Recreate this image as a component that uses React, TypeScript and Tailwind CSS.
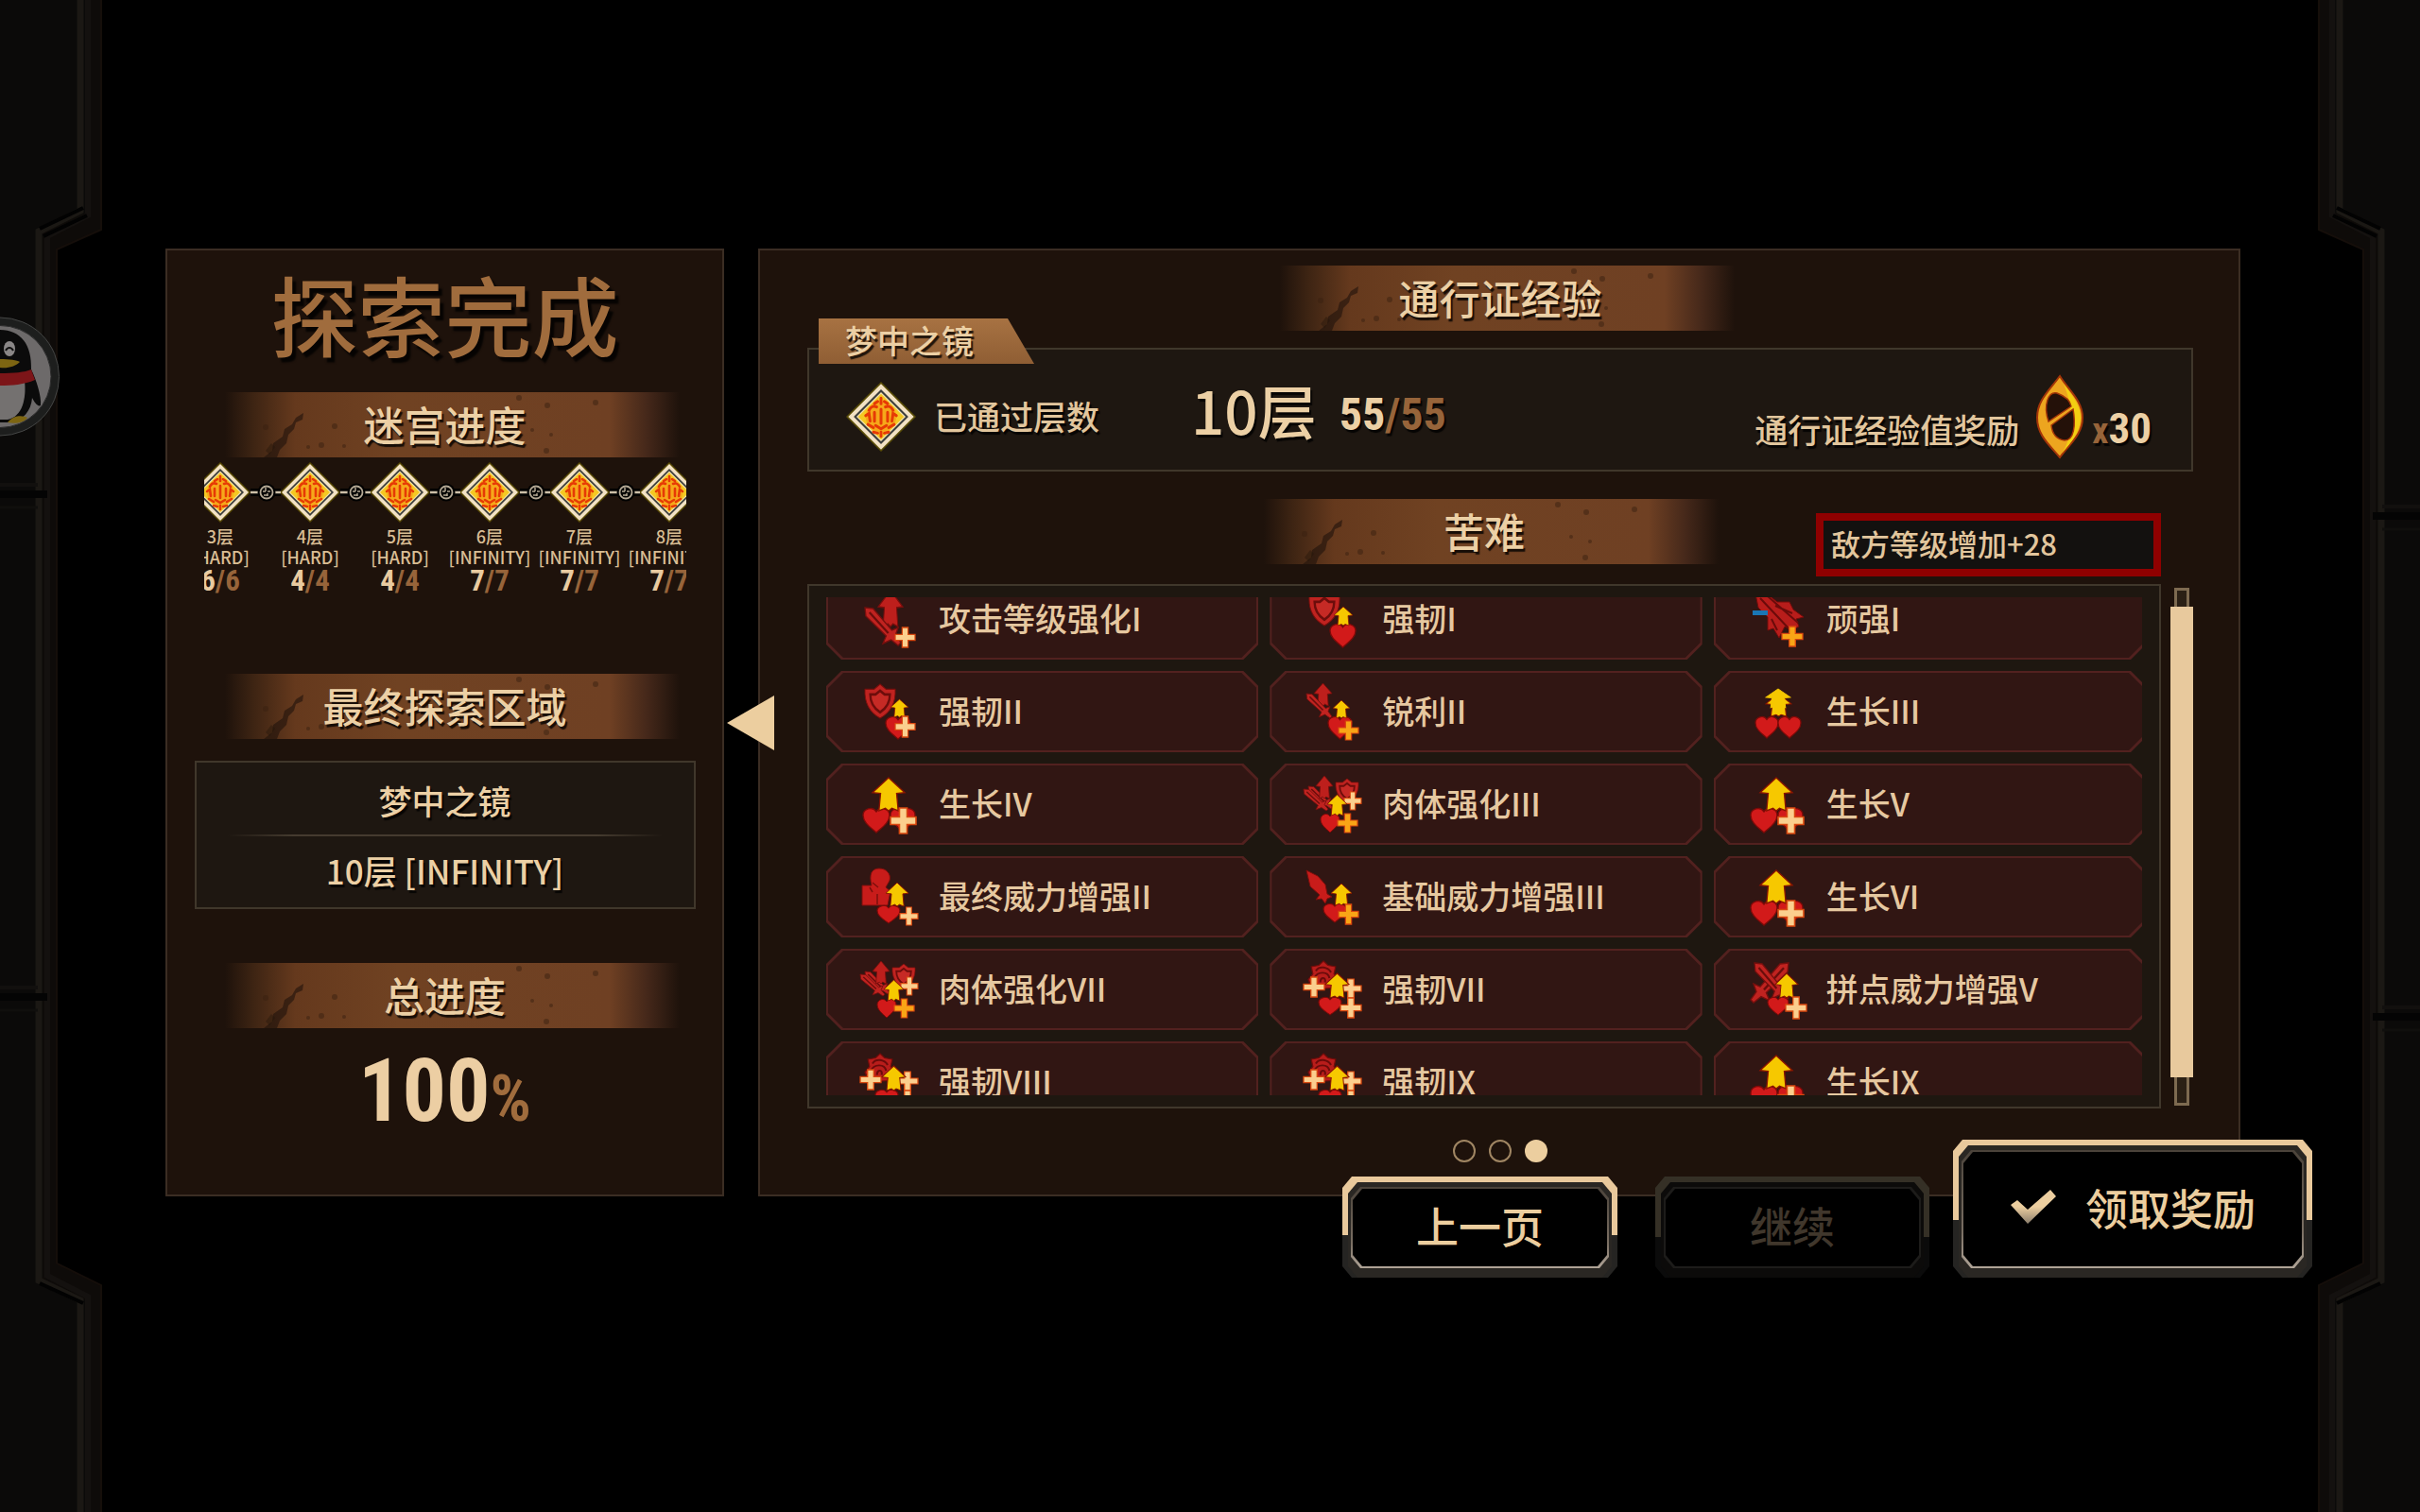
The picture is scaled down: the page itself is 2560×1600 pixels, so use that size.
import type { ReactNode } from 'react'

type Box = { x: number; y: number; w: number; h: number }
type Stage = { floor: string; mode: string; done: number; total: number }

const stages: Stage[] = [
  { floor: '3层', mode: '[HARD]', done: 6, total: 6 },
  { floor: '4层', mode: '[HARD]', done: 4, total: 4 },
  { floor: '5层', mode: '[HARD]', done: 4, total: 4 },
  { floor: '6层', mode: '[INFINITY]', done: 7, total: 7 },
  { floor: '7层', mode: '[INFINITY]', done: 7, total: 7 },
  { floor: '8层', mode: '[INFINITY]', done: 7, total: 7 },
]

const PALE = '#fbcf8e'
const ORANGE = '#f9a516'

const NUM = "font-['Roboto_Condensed','Open_Sans_Condensed','Noto_Sans_Condensed','Roboto',sans-serif] font-bold"
const SHADOW = '[text-shadow:2px_3px_1px_#000000cc]'

/* ── Icon parts, each drawn in a stretched 20x20 box ── */
function Part({ x, y, w, h, children }: Box & { children: ReactNode }) {
  return (
    <svg x={x} y={y} width={w} height={h} viewBox="0 0 20 20" preserveAspectRatio="none" overflow="visible">
      {children}
    </svg>
  )
}

function Heart(p: Box) {
  return (
    <Part {...p}>
      <path d="M10 20 C6 16 0 12 0 6 C0 1 7 -2 10 3 C13 -2 20 1 20 6 C20 12 14 16 10 20Z" fill="#d21a1a" stroke="#7d0a08" strokeWidth="1" />
    </Part>
  )
}

function UpArrow({ color = '#f6c800', edge = '#8a1500', ...p }: Box & { color?: string; edge?: string }) {
  return (
    <Part {...p}>
      <path d="M10 0 L20 9 L15 9.500 L16 20 L12 18.500 L10 20 L8 18.500 L4 20 L5 9.500 L0 9Z" fill={color} stroke={edge} strokeWidth="0.800" />
    </Part>
  )
}

function Plus({ color = PALE, ...p }: Box & { color?: string }) {
  return (
    <Part {...p}>
      <path d="M7 0 H13 V7 H20 V13 H13 V20 H7 V13 H0 V7 H7Z" fill={color} stroke="#d9480f" strokeWidth="1.200" />
    </Part>
  )
}

function Shield(p: Box) {
  return (
    <Part {...p}>
      <path d="M0 3 L6 3 L10 0 L14 3 L20 3 C20.500 11 17 16.500 10 20 C3 16.500 -0.500 11 0 3Z" fill="#bf2320" stroke="#7d0f0c" strokeWidth="0.600" />
      <path d="M3.500 6 L7 6 L10 3.800 L13 6 L16.500 6 C16.500 11 14.500 14 10 16.500 C5.500 14 3.500 11 3.500 6Z" fill="#c62a25" stroke="#6d0d0b" strokeWidth="1.500" />
    </Part>
  )
}

function Sword({ flip, ...p }: Box & { flip?: boolean }) {
  return (
    <Part {...p}>
      <g transform={flip ? 'translate(20 0) scale(-1 1)' : undefined}>
        <path d="M0 0 L4.500 0.500 L15 12 L18.500 10.500 L17 14.500 L20 18.500 L18.500 20 L14.500 17 L10 19 L11.800 15 L0.500 4.500Z" fill="#c02320" stroke="#760f0d" strokeWidth="0.700" />
        <path d="M2.500 2.500 L13 13.500" stroke="#6b0d0b" strokeWidth="1.200" />
      </g>
    </Part>
  )
}

function Rose(p: Box) {
  return (
    <Part {...p}>
      <path d="M10 0 L13 3 L18 4 L17 9 L20 13 L15 19 L3 20 L0 13 L3 9 L2 4 L7 3Z" fill="#b81d1b" stroke="#740c0a" strokeWidth="0.800" />
      <path d="M5 7 C7 3 13 4 15 8 M4 12 C6 7 13 7 14 12 M8 15 C8 11 12 11 11 15" fill="none" stroke="#6b0b0a" strokeWidth="1.300" />
    </Part>
  )
}

const ARROW_RED = { color: '#bd1f1c', edge: '#7a0e0c' }

const growth = (
  <>
    <Heart x={31} y={34} w={26} h={25} />
    <Heart x={2} y={34} w={28} h={26} />
    <UpArrow x={12} y={2} w={34} h={35} />
    <Plus x={31} y={34} w={27} h={27} />
  </>
)

const body = (
  <>
    <Sword x={4} y={11} w={26} h={24} />
    <Sword x={-1} y={14} w={26} h={23} />
    <UpArrow x={12} y={0} w={18} h={24} {...ARROW_RED} />
    <Shield x={33} y={3} w={24} h={26} />
    <Plus x={42} y={17} w={18} h={19} />
    <Heart x={17} y={40} w={20} h={20} />
    <UpArrow x={24} y={20} w={21} h={22} />
    <Plus x={35} y={40} w={21} h={20} color={ORANGE} />
  </>
)

const toughRose = (
  <>
    <Rose x={4} y={0} w={32} h={30} />
    <Plus x={-1} y={17} w={22} h={21} />
    <Plus x={38} y={19} w={22} h={20} />
    <Heart x={15} y={38} w={24} h={19} />
    <UpArrow x={22} y={13} w={25} h={26} />
    <Plus x={38} y={39} w={22} h={21} />
  </>
)

const hardships: { name: string; icon: ReactNode }[] = [
  {
    name: '攻击等级强化I',
    icon: (
      <>
        <UpArrow x={18} y={0} w={26} h={38} {...ARROW_RED} />
        <Sword x={4} y={18} w={38} h={40} />
        <Plus x={36} y={39} w={21} h={21} />
      </>
    ),
  },
  {
    name: '强韧I',
    icon: (
      <>
        <Shield x={5} y={1} w={32} h={36} />
        <Heart x={27} y={35} w={27} h={25} />
        <UpArrow x={31} y={17} w={20} h={20} />
      </>
    ),
  },
  {
    name: '顽强I',
    icon: (
      <>
        <path d="M7 3 L20 4 L30 12 L43 12 L47 20 L58 28 L50 30 L53 38 L46 42 L38 38 L32 50 L26 40 L20 42 L20 28 L10 18Z" fill="#b81d1b" stroke="#740c0a" strokeWidth="1" />
        <path d="M12 8 L44 42 M20 6 L52 34 M28 16 L46 24 M24 30 L30 42" stroke="#6b0b0a" strokeWidth="2" />
        <path d="M4 21 H20 V26 H4Z" fill="#1a76b5" />
        <Plus x={35} y={38} w={22} h={21} color={ORANGE} />
      </>
    ),
  },
  {
    name: '强韧II',
    icon: (
      <>
        <Shield x={4} y={1} w={32} h={36} />
        <Heart x={26} y={35} w={26} h={24} />
        <UpArrow x={31} y={17} w={19} h={19} />
        <Plus x={36} y={35} w={21} h={22} />
      </>
    ),
  },
  {
    name: '锐利II',
    icon: (
      <>
        <UpArrow x={10} y={0} w={19} h={24} {...ARROW_RED} />
        <Sword x={2} y={11} w={27} h={26} />
        <Heart x={25} y={35} w={25} h={24} />
        <UpArrow x={30} y={18} w={18} h={19} />
        <Plus x={36} y={40} w={21} h={20} color={ORANGE} />
      </>
    ),
  },
  {
    name: '生长III',
    icon: (
      <>
        <Heart x={7} y={35} w={24} h={23} />
        <Heart x={31} y={35} w={24} h={23} />
        <UpArrow x={18} y={11} w={27} h={24} />
        <UpArrow x={18} y={6} w={26} h={20} edge="#f6c800" />
      </>
    ),
  },
  { name: '生长IV', icon: growth },
  { name: '肉体强化III', icon: body },
  { name: '生长V', icon: growth },
  {
    name: '最终威力增强II',
    icon: (
      <>
        <path d="M11 18 C8 6 11 0 19 0 C27 0 32 6 30 13 L26 20 L31 24 L28 39 L1 39 L1 18Z" fill="#c81c1a" stroke="#7d0f0c" strokeWidth="1" />
        <path d="M12 15 L18 20 M9 20 L12 25 M17 27 V38" stroke="#7d0f0c" strokeWidth="1.500" />
        <Heart x={17} y={39} w={24} h={19} />
        <UpArrow x={26} y={15} w={24} h={25} />
        <Plus x={41} y={41} w={19} h={19} />
      </>
    ),
  },
  {
    name: '基础威力增强III',
    icon: (
      <>
        <path d="M2 2 L14 8 L22 17 L24 27 L29 30 L24 32 L22 37 L18 32 L12 33 L16 28 L6 19Z" fill="#c81c1a" stroke="#7d0f0c" strokeWidth="1" />
        <Heart x={20} y={37} w={24} h={20} />
        <UpArrow x={28} y={16} w={22} h={23} />
        <Plus x={36} y={38} w={21} h={21} color={ORANGE} />
      </>
    ),
  },
  { name: '生长VI', icon: growth },
  { name: '肉体强化VII', icon: body },
  { name: '强韧VII', icon: toughRose },
  {
    name: '拼点威力增强V',
    icon: (
      <>
        <Sword x={2} y={2} w={40} h={42} flip />
        <Sword x={6} y={2} w={36} h={40} />
        <Heart x={20} y={38} w={22} h={19} />
        <UpArrow x={28} y={13} w={24} h={26} />
        <Plus x={39} y={38} w={22} h={23} />
      </>
    ),
  },
  { name: '强韧VIII', icon: toughRose },
  { name: '强韧IX', icon: toughRose },
  { name: '生长IX', icon: growth },
]

function Emblem({ className }: { className: string }) {
  return (
    <svg viewBox="0 0 64 64" className={className} aria-hidden="true">
      <path d="M32 0 L64 32 L32 64 L0 32Z" fill="#8a7a00" opacity="0.550" />
      <path d="M32 2 L62 32 L32 62 L2 32Z" fill="#f3e2c4" />
      <path d="M32 7 L57 32 L32 57 L7 32Z" fill="#3d3f3d" />
      <path d="M32 9.500 L54.500 32 L32 54.500 L9.500 32Z" fill="#f6e3b0" />
      <path d="M32 11 L53 32 L32 53 L11 32Z" fill="#f5c822" />
      <circle cx="32" cy="32" r="14" fill="#f6a81a" />
      <g fill="none" stroke="#e63a05" strokeWidth="2.600" strokeLinecap="round">
        <path d="M32 15 V20 M26 20 L29 18 M38 20 L35 18 M21 26 C23 22 26 22 28 23 M43 26 C41 22 38 22 36 23" />
        <path d="M18 31 L21 29 L22 36 M46 31 L43 29 L42 36 M26 28 V36 M32 25 V38 M38 28 V36" />
        <path d="M20 39 L25 42 M44 39 L39 42 M27 40 L32 43 L37 40 M25 46 L29 47 M39 46 L35 47 M32 46 V50" />
      </g>
    </svg>
  )
}

function Link() {
  return (
    <svg viewBox="0 0 36 20" className="absolute top-[22px] left-[77px] z-10 h-5 w-9" aria-hidden="true">
      <path d="M2 10 H34" stroke="#000" strokeWidth="8" />
      <path d="M2 10 H10 M26 10 H34" stroke="#cdbfa8" strokeWidth="2.500" />
      <circle cx="19" cy="10" r="9.500" fill="#000" />
      <circle cx="19" cy="10" r="6.500" fill="none" stroke="#b3a793" strokeWidth="1.800" />
      <path d="M15 9 H18 M20 9 H23 M18 5 V9 M20 11 V14 M16 13 H20" stroke="#b3a793" strokeWidth="1.500" />
    </svg>
  )
}

function Banner({ children }: { children: ReactNode }) {
  return (
    <div className="relative h-[69px] w-[496px] bg-[linear-gradient(to_right,transparent_3%,#3d2413_9%,#65391d_18%,#704222_40%,#6f4023_85%,#45281a_93%,transparent_100%)]">
      <svg viewBox="0 0 496 69" className="absolute inset-0 h-full w-full" aria-hidden="true">
        <path d="M98 22 L90 27 L86 34 L78 39 L76 47 L66 54 L65 62 L56 69 H70 L73 61 L80 54 L82 45 L88 39 L90 32 L97 29Z" fill="#20130b" opacity="0.600" />
        <path d="M58 62 L64 54 L68 58 L62 66Z" fill="#20130b" opacity="0.400" />
        <g fill="#3a2111" opacity="0.500">
          <circle cx="58" cy="37" r="3" />
          <circle cx="131" cy="36" r="3" />
          <circle cx="117" cy="56" r="3" />
          <circle cx="141" cy="57" r="2" />
          <circle cx="103" cy="58" r="2" />
          <circle cx="326" cy="6" r="3" />
          <circle cx="356" cy="14" r="3" />
          <circle cx="407" cy="11" r="3" />
          <circle cx="355" cy="62" r="3" />
          <circle cx="340" cy="40" r="2" />
          <circle cx="360" cy="45" r="2" />
        </g>
      </svg>
      <h2 className={`relative text-center text-[43px] leading-[66px] font-medium text-[#ecd0a5] ${SHADOW}`}>{children}</h2>
    </div>
  )
}

function FrameButton({ children, size, disabled }: { children: ReactNode; size: string; disabled?: boolean }) {
  const cut = '[clip-path:polygon(10px_0,calc(100%_-_10px)_0,100%_12px,100%_calc(100%_-_12px),calc(100%_-_10px)_100%,10px_100%,0_calc(100%_-_12px),0_12px)]'
  const rim = disabled
    ? 'bg-[linear-gradient(to_bottom,#353026_60%,#0b0b0b_60%)]'
    : 'bg-[linear-gradient(to_bottom,#e9c99c_58%,#252422_58%)]'
  return (
    <button disabled={disabled} className={`flex px-[6px] pt-[6px] ${size} ${cut} ${rim}`}>
      <span className={`flex h-full w-full px-[3px] pt-[5px] pb-[10px] ${cut} ${disabled ? 'bg-[#0c0b0a]' : 'bg-[#2a2723]'}`}>
        <span className={`flex h-full w-full p-[2px] ${cut} ${disabled ? 'bg-[#1d1c1a]' : 'bg-[linear-gradient(to_bottom,#4b433a,#7b7064_70%,#b0a497)]'}`}>
          <span className={`flex h-full w-full items-center justify-center bg-black pb-[5px] text-[45px] leading-none ${cut} ${disabled ? 'text-[#40372c]' : 'text-[#ecce9f]'}`}>
            {children}
          </span>
        </span>
      </span>
    </button>
  )
}

function Pillar({ className, seams }: { className: string; seams: number[] }) {
  return (
    <svg viewBox="0 0 110 1600" preserveAspectRatio="none" className={`pointer-events-none absolute inset-y-0 h-full w-[110px] ${className}`} aria-hidden="true">
      <path d="M0 0 H108 V243 L60 264 V1337 L108 1360 V1600 H0Z" fill="#0e0b09" />
      <path d="M0 0 H90 V225 L45 246 V1355 L90 1376 V1600 H0Z" fill="#0b0a09" />
      <path d="M85 0 V223 L41 245 V1355 L85 1376 V1600" fill="none" stroke="#1b1814" strokeWidth="7" />
      <path d="M93 0 V228 L50 250 V1350 L93 1372 V1600" fill="none" stroke="#14110f" strokeWidth="6" />
      <path d="M107 0 V243 L60 264 V1337 L107 1360 V1600" fill="none" stroke="#150e0a" strokeWidth="2" />
      <path d="M42 242 L88 220 M46 250 L92 228 M42 1358 L88 1379" stroke="#020202" strokeWidth="4" />
      {seams.map(y => (
        <g key={y}>
          <path d={`M0 ${y - 10} H40`} stroke="#12100e" strokeWidth="4" />
          <path d={`M0 ${y} H50`} stroke="#040404" strokeWidth="8" />
          <path d={`M0 ${y + 14} H40`} stroke="#100f0d" strokeWidth="3" />
        </g>
      ))}
    </svg>
  )
}

function FloatingPenguin() {
  return (
    <button aria-label="QQ" className="absolute top-[335px] left-0 h-[127px] w-[66px]">
      <svg viewBox="0 0 66 127" className="h-full w-full" aria-hidden="true">
        <circle cx="0" cy="63.500" r="62.500" fill="#1d1e1d" stroke="#454645" strokeWidth="1" />
        <circle cx="0" cy="63.500" r="54" fill="#6d6a6a" stroke="#2b2b2b" strokeWidth="1" />
        <path d="M0 14 C22 14 34 30 33 56 C38 66 44 84 43 94 C40 96 36 90 34 86 C33 100 24 110 12 112 H0Z" fill="#0b0b0b" />
        <path d="M0 68 H26 C28 86 24 106 8 109 H0Z" fill="#747170" />
        <ellipse cx="10" cy="34" rx="6" ry="8" fill="#8a8787" />
        <path d="M6 36 C8 32 12 32 14 36" fill="none" stroke="#111" strokeWidth="2" />
        <path d="M0 45 C10 45 18 46 21 48 C16 53 8 55 0 54Z" fill="#7d6512" />
        <path d="M0 60 C14 60 26 59 33 56 L37 67 C26 72 12 73 0 73Z" fill="#7c1518" />
        <path d="M8 112 C14 104 24 104 29 107 C26 112 16 114 8 112Z" fill="#7d6512" />
      </svg>
    </button>
  )
}

function LabyrinthPanel() {
  return (
    <section className="flex w-[591px] shrink-0 flex-col items-center border-2 border-[#3b2d23] bg-[#1e120b] pt-[18px] pb-[59px]">
      <h1 className="text-[92px] leading-[96px] font-medium text-[#a06c3d] [text-shadow:4px_5px_2px_#000000cc]">探索完成</h1>

      <div className="mt-9">
        <Banner>迷宫进度</Banner>
      </div>
      <ol className="mt-[5px] flex w-[510px] justify-center overflow-hidden">
        {stages.map((s, i) => (
          <li key={s.floor} className="relative flex w-[95px] shrink-0 flex-col items-center text-[18px] leading-[22px] whitespace-nowrap text-[#d9bd94]">
            <Emblem className="mb-[3px] h-16 w-16" />
            {i < stages.length - 1 && <Link />}
            <span>{s.floor}</span>
            <span>{s.mode}</span>
            <span className={`text-[31px] leading-[30px] text-[#e9cba0] ${NUM}`}>
              {s.done}
              <span className="text-[#97643a]">/{s.total}</span>
            </span>
          </li>
        ))}
      </ol>

      <div className="mt-[83px]">
        <Banner>最终探索区域</Banner>
      </div>
      <div className={`mt-[23px] flex h-[157px] w-[530px] flex-col items-center justify-center border-2 border-[#40372b] bg-[#1e1711] text-[35px] text-[#ecd0a5] ${SHADOW}`}>
        <p className="leading-[72px]">梦中之镜</p>
        <div className="h-[2px] w-[460px] bg-[linear-gradient(to_right,transparent,#453b2f_15%,#453b2f_85%,transparent)]" />
        <p className="leading-[72px]">10层 [INFINITY]</p>
      </div>

      <div className="mt-[57px]">
        <Banner>总进度</Banner>
      </div>
      <p className={`mt-[17px] h-[100px] text-[92px] leading-[100px] text-[#ecceA3] ${NUM}`}>
        100<span className="text-[68px] text-[#a06c3d]">%</span>
      </p>
    </section>
  )
}

function HardshipCard({ name, icon }: { name: string; icon: ReactNode }) {
  const cut = '[clip-path:polygon(16px_0,calc(100%_-_16px)_0,100%_16px,100%_calc(100%_-_16px),calc(100%_-_16px)_100%,16px_100%,0_calc(100%_-_16px),0_16px)]'
  return (
    <li className={`h-[86px] bg-[#52211f] p-[2px] ${cut}`}>
      <div className={`flex h-full items-center gap-[22px] bg-[#311613] pl-[35px] ${cut}`}>
        <svg viewBox="0 0 60 60" className="h-[60px] w-[60px] shrink-0 overflow-visible" aria-hidden="true">
          {icon}
        </svg>
        <span className="pb-[2px] text-[34px] leading-10 whitespace-nowrap text-[#e6c8a0]">{name}</span>
      </div>
    </li>
  )
}

function RewardPanel() {
  return (
    <section className="relative flex min-w-0 flex-1 flex-col border-2 border-[#3b2d23] bg-[#1e120b] pt-4 pr-12 pl-[50px]">
      <button aria-label="收起" className="absolute top-1/2 -left-[36px] h-[60px] w-[52px] -translate-y-1/2">
        <svg viewBox="0 0 52 60" className="h-full w-full" aria-hidden="true">
          <path d="M51 1 V59 L1 30Z" fill="#ecce9f" />
        </svg>
      </button>

      <div className="flex justify-center">
        <Banner>通行证经验</Banner>
      </div>

      <div className={`relative mt-[18px] flex h-[131px] items-center border-2 border-[#40372b] bg-[#1e1711] pt-[14px] pr-[42px] pl-[39px] text-[35px] text-[#e2c69d] ${SHADOW}`}>
        <div className="absolute -top-[33px] left-[10px] h-[48px] w-[228px] bg-[linear-gradient(to_bottom,#a77242,#8f5e34)] pl-[28px] text-[34px] leading-[46px] text-[#ecd0a5] [clip-path:polygon(0_0,200px_0,100%_100%,0_100%)]">
          梦中之镜
        </div>
        <Emblem className="h-[74px] w-[74px]" />
        <span className="ml-[19px]">已通过层数</span>
        <span className="-mt-4 ml-[97px] text-[62px] leading-[70px] text-[#ecd0a5]">10层</span>
        <span className={`-mt-1 ml-6 text-[48px] leading-[60px] text-[#ecd0a5] ${NUM}`}>
          55<span className="text-[#97643a]">/55</span>
        </span>
        <div className="ml-auto flex items-end">
          <span className="mb-[10px] leading-[44px]">通行证经验值奖励</span>
          <svg viewBox="0 0 52 90" className="ml-[17px] h-[90px] w-[52px]" aria-hidden="true">
            <path d="M26 2 C36 18 50 28 50 46 C50 64 36 74 26 88 C14 74 2 64 2 46 C2 28 14 18 26 2Z" fill="#eda51f" stroke="#a33508" strokeWidth="2" />
            <path d="M30 10 C40 24 49 34 48 48 C47 62 38 72 28 84 C40 66 42 40 30 10Z" fill="#f3cf12" />
            <path d="M14 50 C8 32 14 18 23 20 C31 23 37 28 38 34Z" fill="#241109" stroke="#a33508" strokeWidth="1.500" />
            <path d="M17 54 L40 37 C43 54 41 70 31 70 C24 69 18 64 17 54Z" fill="#241109" stroke="#a33508" strokeWidth="1.500" />
          </svg>
          <span className={`mb-[5px] ml-2 text-[45px] leading-[50px] text-[#ecd0a5] ${NUM}`}>
            <span className="text-[38px] text-[#97643a]">x</span>30
          </span>
        </div>
      </div>

      <div className="mt-[29px] mr-[34px] grid h-[82px] grid-cols-[1fr_auto_1fr]">
        <div className="col-start-2">
          <Banner>苦难</Banner>
        </div>
        <p className="h-[67px] w-[365px] self-end justify-self-end border-8 border-[#8f0000] bg-[#13110f] pl-2 text-[31px] leading-[48px] text-[#e2c69d]">
          敌方等级增加+28
        </p>
      </div>

      <div className="mt-2 flex gap-[10px]">
        <div className="min-w-0 flex-1 border-2 border-[#40372b] bg-[#1e1710] px-[18px] py-3">
          <div className="h-[527px] overflow-hidden">
            <ul className="-mt-5 -mr-1 grid grid-cols-3 gap-3">
              {hardships.map(h => (
                <HardshipCard key={h.name} name={h.name} icon={h.icon} />
              ))}
            </ul>
          </div>
        </div>
        <div className="flex w-6 flex-col items-center pt-1 pb-[3px]">
          <div className="h-5 w-4 border-[3px] border-b-0 border-[#7d6a50] bg-[#2b2015]" />
          <div className="w-6 flex-1 bg-[#e8c99d]" />
          <div className="h-[30px] w-4 border-[3px] border-t-0 border-[#7d6a50] bg-[#2b2015]" />
        </div>
      </div>

      <div className="mt-[33px] flex justify-center gap-[14px]">
        <button aria-label="第1页" className="h-6 w-6 rounded-full border-2 border-[#a08663]" />
        <button aria-label="第2页" className="h-6 w-6 rounded-full border-2 border-[#a08663]" />
        <button aria-label="第3页" aria-current="page" className="h-6 w-6 rounded-full bg-[#ecce9f]" />
      </div>
    </section>
  )
}

export default function App() {
  return (
    <div className="relative min-h-screen overflow-hidden bg-black pt-[263px] font-['Noto_Sans_CJK_SC',sans-serif] font-medium">
      <Pillar className="left-0" seams={[523, 1055]} />
      <Pillar className="right-0 -scale-x-100" seams={[546, 1076]} />
      <FloatingPenguin />

      <main className="relative flex gap-9 pr-[190px] pl-[175px]">
        <LabyrinthPanel />
        <RewardPanel />
      </main>

      <footer className="relative -mt-[60px] flex items-end justify-end pr-[114px]">
        <FrameButton size="h-[107px] w-[291px]">上一页</FrameButton>
        <div className="mr-[25px] ml-10 flex">
          <FrameButton size="h-[107px] w-[290px]" disabled>
            继续
          </FrameButton>
        </div>
        <FrameButton size="h-[146px] w-[380px]">
          <svg viewBox="0 0 50 38" className="mr-[30px] h-[38px] w-[50px]" aria-hidden="true">
            <defs>
              <linearGradient id="tick" x1="0" y1="0" x2="0" y2="1">
                <stop offset="0.500" stopColor="#ecce9f" />
                <stop offset="1" stopColor="#8a7d6c" />
              </linearGradient>
            </defs>
            <path d="M1 17 L8 12 L19 22 L43 1 L49 8 L19 37Z" fill="url(#tick)" />
          </svg>
          领取奖励
        </FrameButton>
      </footer>
    </div>
  )
}
